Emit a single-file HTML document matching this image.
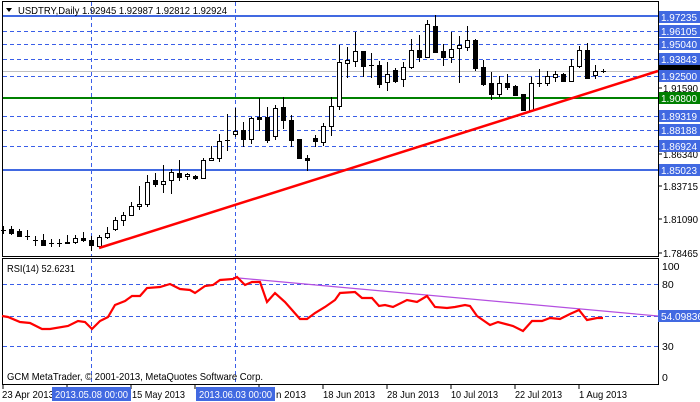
<!DOCTYPE html>
<html><head><meta charset="utf-8"><style>
html,body{margin:0;padding:0;background:#fff;width:700px;height:402px;overflow:hidden}
svg{display:block;font-family:"Liberation Sans","DejaVu Sans",sans-serif;font-size:10.5px}
</style></head><body>
<svg width="700" height="402" viewBox="0 0 700 402" xmlns="http://www.w3.org/2000/svg">
<rect width="700" height="402" fill="#fff"/>
<rect x="2.5" y="1.5" width="656" height="255" fill="#fff" stroke="#000"/>
<g stroke="#3a5ee8" stroke-dasharray="4,3" stroke-width="1">
<line x1="3" y1="31.5" x2="658" y2="31.5"/>
<line x1="3" y1="44.5" x2="658" y2="44.5"/>
<line x1="3" y1="59.5" x2="658" y2="59.5"/>
<line x1="3" y1="76.5" x2="658" y2="76.5"/>
<line x1="3" y1="116.5" x2="658" y2="116.5"/>
<line x1="3" y1="130.5" x2="658" y2="130.5"/>
<line x1="3" y1="146.5" x2="658" y2="146.5"/>
<line x1="91.5" y1="2" x2="91.5" y2="256"/>
<line x1="235.5" y1="2" x2="235.5" y2="256"/>
</g>
<line x1="3" y1="71.5" x2="658" y2="71.5" stroke="#c0c0c0"/>
<line x1="3" y1="16" x2="658" y2="16" stroke="#4169e1" stroke-width="2"/>
<line x1="3" y1="170" x2="658" y2="170" stroke="#4169e1" stroke-width="2"/>
<line x1="3" y1="98" x2="658" y2="98" stroke="#008000" stroke-width="2"/>
<g id="candles" stroke="#000" stroke-width="1"></g>
<line x1="99" y1="248" x2="658" y2="71" stroke="#ff0000" stroke-width="2.5"/>
<path d="M6 8 L12 8 L9 12 Z" fill="#000"/>
<text x="18" y="14" fill="#000" textLength="209" lengthAdjust="spacingAndGlyphs">USDTRY,Daily  1.92945 1.92987 1.92812 1.92924</text>
<line x1="658.5" y1="1" x2="658.5" y2="257" stroke="#000"/>
<g fill="#000">
<text x="663" y="92" textLength="35" lengthAdjust="spacingAndGlyphs">1.91590</text>
<text x="663" y="158" textLength="35" lengthAdjust="spacingAndGlyphs">1.86340</text>
<text x="663" y="190" textLength="35" lengthAdjust="spacingAndGlyphs">1.83715</text>
<text x="663" y="223" textLength="35" lengthAdjust="spacingAndGlyphs">1.81090</text>
<text x="663" y="257" textLength="35" lengthAdjust="spacingAndGlyphs">1.78465</text>
</g>
<g stroke="#000"><line x1="658" y1="88" x2="662" y2="88"/><line x1="658" y1="154" x2="662" y2="154"/><line x1="658" y1="186" x2="662" y2="186"/><line x1="658" y1="219" x2="662" y2="219"/><line x1="658" y1="253" x2="662" y2="253"/></g>
<rect x="659" y="65" width="41" height="12" fill="#000"/>
<g id="plabels"></g>
<rect x="2.5" y="258.5" width="656" height="126" fill="#fff" stroke="#000"/>
<g stroke="#3a5ee8" stroke-dasharray="4,3">
<line x1="3" y1="284.5" x2="658" y2="284.5"/>
<line x1="3" y1="316.5" x2="658" y2="316.5"/>
<line x1="3" y1="346.5" x2="658" y2="346.5"/>
<line x1="91.5" y1="259" x2="91.5" y2="384"/>
<line x1="235.5" y1="259" x2="235.5" y2="384"/>
</g>
<line x1="233" y1="277.5" x2="658" y2="316" stroke="#b44fe0" stroke-width="1.2"/>
<polyline fill="none" stroke="#ff0000" stroke-width="2.2" points="2,316 8,317 20,322 30,323 42,329 50,329 68,326 78,321 85,322 92,329 100,321 108,317 115,305 125,301 132,296 140,296 147,288 160,287 170,284 180,289 190,290 195,293 205,286 213,285 220,280 233,279 237,277 245,285 252,282 260,282 267,302 275,293 285,302 300,319 307,319 315,313 325,307 335,300 340,293 355,292 362,298 372,298 379,306 385,305 393,307 407,300 417,302 427,296 435,307 447,308 455,307 465,305 470,306 477,316 490,325 498,322 513,326 523,331 532,321 542,321 550,318 560,319 570,314 579,310 587,320 597,318 603,318"/>
<text x="7" y="272" fill="#000" textLength="68" lengthAdjust="spacingAndGlyphs">RSI(14) 52.6231</text>
<text x="7" y="380" fill="#000" textLength="256" lengthAdjust="spacingAndGlyphs">GCM MetaTrader, © 2001-2013, MetaQuotes Software Corp.</text>
<g fill="#000">
<text x="662" y="270">100</text>
<text x="662" y="288">80</text>
<text x="662" y="350">30</text>
<text x="662" y="381">0</text>
</g>
<rect x="658" y="310" width="42" height="12" fill="#4169e1"/>
<text x="661" y="320" fill="#fff" textLength="42" lengthAdjust="spacingAndGlyphs">54.09836</text>
<g stroke="#000">
<line x1="3" y1="385" x2="3" y2="389"/><line x1="67" y1="385" x2="67" y2="389"/><line x1="131" y1="385" x2="131" y2="389"/><line x1="195" y1="385" x2="195" y2="389"/><line x1="259" y1="385" x2="259" y2="389"/><line x1="323" y1="385" x2="323" y2="389"/><line x1="387" y1="385" x2="387" y2="389"/><line x1="451" y1="385" x2="451" y2="389"/><line x1="515" y1="385" x2="515" y2="389"/><line x1="579" y1="385" x2="579" y2="389"/>
</g>
<g fill="#000">
<text x="2" y="398" textLength="52" lengthAdjust="spacingAndGlyphs">23 Apr 2013</text>
<text x="132" y="398" textLength="53" lengthAdjust="spacingAndGlyphs">15 May 2013</text>
<text x="276" y="398" textLength="30" lengthAdjust="spacingAndGlyphs">n 2013</text>
<text x="323" y="398" textLength="52" lengthAdjust="spacingAndGlyphs">18 Jun 2013</text>
<text x="387" y="398" textLength="52" lengthAdjust="spacingAndGlyphs">28 Jun 2013</text>
<text x="451" y="398" textLength="47" lengthAdjust="spacingAndGlyphs">10 Jul 2013</text>
<text x="515" y="398" textLength="47" lengthAdjust="spacingAndGlyphs">22 Jul 2013</text>
<text x="579" y="398" textLength="48" lengthAdjust="spacingAndGlyphs">1 Aug 2013</text>
</g>
<rect x="52" y="387" width="79" height="14" fill="#4169e1"/>
<text x="55" y="398" fill="#fff" textLength="73" lengthAdjust="spacingAndGlyphs">2013.05.08 00:00</text>
<rect x="196" y="387" width="79" height="14" fill="#4169e1"/>
<text x="199" y="398" fill="#fff" textLength="73" lengthAdjust="spacingAndGlyphs">2013.06.03 00:00</text>
</svg>
<script>
var C=[[3,226,234,230,230,'d'],[11,226,235,229,233,'b'],[19,229,237,231,236,'b'],[27,230,240,236,237,'d'],[35,236,246,240,240,'d'],[43,234,245,240,245,'b'],[51,239,247,243,243,'d'],[59,239,247,243,243,'d'],[67,235,244,242,243,'b'],[75,235,244,238,242,'w'],[83,232,242,238,240,'b'],[91,236,251,240,245,'b'],[99,235,248,237,246,'w'],[107,227,239,233,237,'w'],[115,217,231,220,229,'w'],[123,212,226,215,220,'w'],[131,202,215,206,215,'w'],[139,186,210,204,206,'w'],[147,175,207,182,204,'w'],[155,173,187,180,184,'b'],[163,165,193,181,184,'w'],[171,169,194,172,180,'w'],[179,160,181,173,177,'b'],[187,173,180,174,176,'w'],[195,175,180,176,178,'b'],[203,158,179,160,178,'w'],[211,146,161,158,160,'w'],[219,134,162,141,158,'w'],[227,114,151,140,140,'d'],[235,108,137,131,134,'w'],[243,122,147,130,139,'b'],[251,117,144,118,139,'w'],[259,98,131,117,119,'b'],[267,107,143,117,140,'b'],[275,105,140,108,136,'w'],[283,97,129,107,120,'b'],[291,115,147,120,140,'b'],[299,139,158,139,158,'b'],[307,155,171,158,160,'b'],[315,135,147,138,141,'b'],[323,123,146,126,142,'w'],[331,97,136,106,126,'w'],[339,45,110,62,106,'w'],[347,47,78,60,63,'w'],[355,32,67,51,61,'w'],[363,51,77,51,66,'b'],[371,53,78,65,65,'d'],[379,61,88,65,84,'b'],[387,62,91,74,82,'w'],[395,68,83,70,81,'b'],[403,62,87,67,79,'w'],[411,39,69,50,67,'w'],[419,35,62,50,57,'b'],[427,20,58,24,57,'w'],[435,15,53,26,52,'b'],[443,44,66,51,57,'b'],[451,32,63,49,57,'w'],[459,36,83,45,48,'w'],[467,26,51,40,47,'w'],[475,39,71,40,68,'b'],[483,60,86,67,84,'b'],[491,72,100,83,94,'b'],[499,76,97,83,94,'w'],[507,74,90,83,87,'b'],[515,85,96,86,95,'b'],[523,94,110,94,110,'b'],[531,77,111,83,110,'w'],[539,69,87,83,83,'d'],[547,71,86,76,83,'w'],[555,71,82,74,77,'w'],[563,73,82,74,81,'b'],[571,59,81,66,81,'w'],[579,46,68,50,66,'w'],[587,43,79,50,78,'b'],[595,65,79,71,75,'w'],[603,69,73,71,71,'d']];
var ns='http://www.w3.org/2000/svg',g=document.getElementById('candles');
function el(n,a){var e=document.createElementNS(ns,n);for(var k in a)e.setAttribute(k,a[k]);g.appendChild(e);return e;}
C.forEach(function(c){var x=c[0]+0.5;el('line',{x1:x,y1:c[1],x2:x,y2:c[2]});
if(c[5]=='d'){el('line',{x1:c[0]-2,y1:c[3]+0.5,x2:c[0]+3,y2:c[3]+0.5});}
else{var h=Math.max(1,c[4]-c[3]);el('rect',{x:c[0]-2+0.5,y:c[3]+0.5,width:4,height:h,fill:c[5]=='w'?'#fff':'#000'});}});
var L=[['1.97235',17,'#4169e1'],['1.96105',31,'#4169e1'],['1.95040',44,'#4169e1'],['1.93843',59,'#4169e1'],['1.92500',76,'#4169e1'],['1.90800',98,'#008000'],['1.89319',116,'#4169e1'],['1.88188',130,'#4169e1'],['1.86924',146,'#4169e1'],['1.85023',170,'#4169e1']];
var pg=document.getElementById('plabels');
L.forEach(function(l){var r=document.createElementNS(ns,'rect');r.setAttribute('x',659);r.setAttribute('y',l[1]-6);r.setAttribute('width',41);r.setAttribute('height',12);r.setAttribute('fill',l[2]);pg.appendChild(r);
var t=document.createElementNS(ns,'text');t.setAttribute('x',661);t.setAttribute('y',l[1]+4);t.setAttribute('fill','#fff');t.setAttribute('textLength','36');t.setAttribute('lengthAdjust','spacingAndGlyphs');t.textContent=l[0];pg.appendChild(t);});
</script>
</body></html>
